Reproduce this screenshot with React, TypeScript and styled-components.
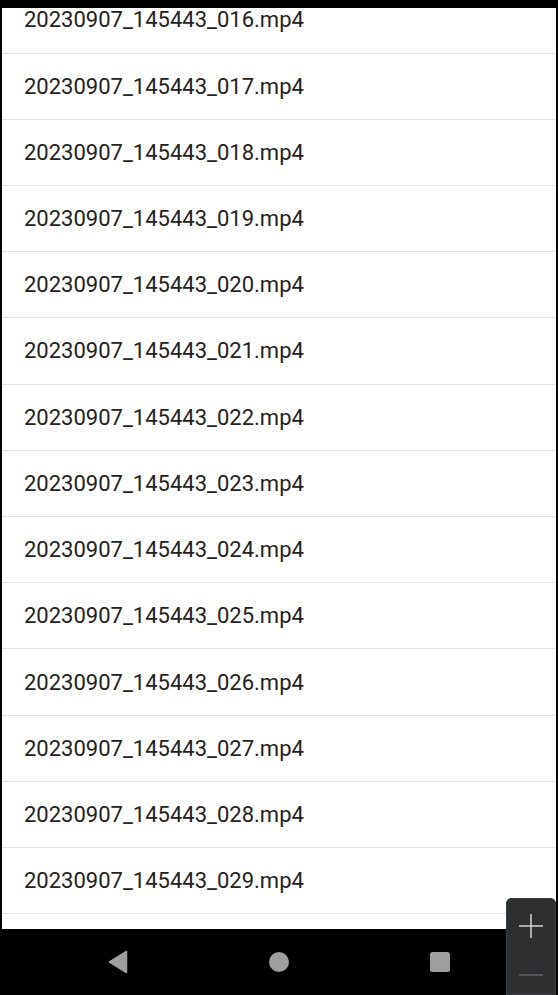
import React from "react";
import styled, { createGlobalStyle } from "styled-components";

const Global = createGlobalStyle`
  html, body { margin: 0; padding: 0; background: #000; }
  #root { height: 995px; }
`;

const Screen = styled.div`
  position: relative;
  height: 995px;
  width: 558px;
  background: #000;
  display: flex;
  flex-direction: column;
  overflow: hidden;
`;

const TopStrip = styled.div`
  height: 8px;
  flex: none;
`;

const PanelWrap = styled.div`
  flex: 1;
  padding: 0 2px;
  display: flex;
  min-height: 0;
`;

const Panel = styled.div`
  flex: 1;
  background: #fff;
  overflow: hidden;
`;

const List = styled.ul`
  list-style: none;
  margin: -20.73px 0 0 0;
  padding: 0;
`;

const Row = styled.li`
  box-sizing: border-box;
  height: 66.23px;
  display: flex;
  align-items: center;
  padding-left: 22px;
  border-bottom: 1.5px solid #e2e2e2;
  font-family: Roboto, "Liberation Sans", sans-serif;
  font-size: 22px;
  color: #222222;
`;

const NavBar = styled.div`
  height: 66px;
  flex: none;
  display: flex;
  justify-content: center;
  align-items: center;
  gap: 121px;
`;

const NavButton = styled.div`
  width: 40px;
  height: 40px;
  display: flex;
  align-items: center;
  justify-content: center;
`;

const Circle = styled.div`
  width: 20px;
  height: 20px;
  border-radius: 50%;
  background: #9e9e9e;
`;

const Square = styled.div`
  width: 20px;
  height: 20px;
  border-radius: 2.5px;
  background: #9e9e9e;
`;

const Zoom = styled.div`
  position: absolute;
  right: 2px;
  bottom: 0;
  width: 50px;
  height: 97px;
  background: #2e2f31;
  border-radius: 6px 6px 0 0;
  box-shadow: inset 0 0 0 1px #3a3b3e;
  display: flex;
  flex-direction: column;
  align-items: center;
`;

const ZoomIn = styled.div`
  height: 56px;
  width: 100%;
  display: flex;
  align-items: center;
  justify-content: center;
`;

const ZoomOut = styled.div`
  flex: 1;
  width: 100%;
  display: flex;
  align-items: flex-start;
  justify-content: center;
  padding-top: 19px;
`;

const files = Array.from({ length: 15 }, (_, i) =>
  `20230907_145443_${String(16 + i).padStart(3, "0")}.mp4`
);

export default function App() {
  return (
    <>
      <Global />
      <Screen>
        <TopStrip />
        <PanelWrap>
          <Panel>
            <List>
              {files.map((f) => (
                <Row key={f}>{f}</Row>
              ))}
            </List>
          </Panel>
        </PanelWrap>
        <NavBar>
          <NavButton>
            <svg width="20" height="24" viewBox="0 0 20 24">
              <path
                d="M18.5 1.5 L18.5 22.5 L1.5 12 Z"
                fill="#9e9e9e"
                stroke="#9e9e9e"
                strokeWidth="1.5"
                strokeLinejoin="round"
              />
            </svg>
          </NavButton>
          <NavButton>
            <Circle />
          </NavButton>
          <NavButton>
            <Square />
          </NavButton>
        </NavBar>
        <Zoom>
          <ZoomIn>
            <svg width="26" height="26" viewBox="0 0 26 26">
              <path d="M13 1 V25 M1 13 H25" stroke="#d4d4d4" strokeWidth="1.5" />
            </svg>
          </ZoomIn>
          <ZoomOut>
            <svg width="26" height="4" viewBox="0 0 26 4">
              <path d="M1 2 H25" stroke="#646568" strokeWidth="1.5" />
            </svg>
          </ZoomOut>
        </Zoom>
      </Screen>
    </>
  );
}
